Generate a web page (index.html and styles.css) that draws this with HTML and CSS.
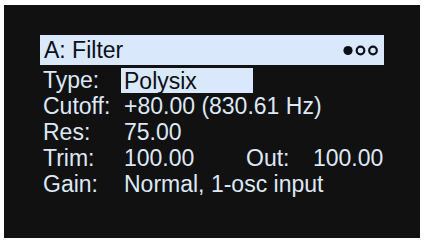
FILE: index.html
```html
<!DOCTYPE html>
<html>
<head>
<meta charset="utf-8">
<link rel="stylesheet" href="styles.css">
</head>
<body>
<div class="screen">
  <div class="header">
    <span class="title">A: Filter</span>
    <svg class="dots" width="36" height="11" viewBox="0 0 36 11">
      <circle cx="5" cy="5.5" r="4.6" fill="#0b1018"/>
      <circle cx="17.5" cy="5.5" r="3.8" fill="none" stroke="#0b1018" stroke-width="2.2"/>
      <circle cx="30" cy="5.5" r="3.8" fill="none" stroke="#0b1018" stroke-width="2.2"/>
    </svg>
  </div>
  <div class="row">
    <span class="label">Type:</span>
    <span class="value selected">Polysix</span>
  </div>
  <div class="row">
    <span class="label">Cutoff:</span>
    <span class="value">+80.00 (830.61 Hz)</span>
  </div>
  <div class="row">
    <span class="label">Res:</span>
    <span class="value">75.00</span>
  </div>
  <div class="row">
    <span class="label">Trim:</span>
    <span class="value short">100.00</span>
    <span class="label out">Out:</span>
    <span class="value">100.00</span>
  </div>
  <div class="row">
    <span class="label">Gain:</span>
    <span class="value">Normal, 1-osc input</span>
  </div>
</div>
</body>
</html>
```
FILE: styles.css
```css
html, body {
  margin: 0;
  padding: 0;
  background: #ffffff;
}
body {
  width: 426px;
  height: 244px;
  overflow: hidden;
}
.screen {
  margin: 5px 6px 0 4px;
  width: 416px;
  height: 233px;
  background: #111111;
  box-sizing: border-box;
  padding: 30px 0 0 36px;
  font-family: "Liberation Sans", Arial, sans-serif;
  font-size: 23px;
  color: #dde8f6;
}
.header {
  width: 344px;
  height: 30px;
  background: #dae8fb;
  color: #0b1018;
  display: flex;
  align-items: center;
  justify-content: space-between;
  padding: 0 5px 0 4px;
  box-sizing: border-box;
  line-height: 30px;
  margin-bottom: 2px;
}
.dots {
  display: block;
}
.row {
  display: flex;
  height: 26px;
  line-height: 26px;
  padding-left: 3px;
  white-space: nowrap;
}
.label {
  width: 78px;
  flex: none;
}
.value {
  padding-left: 3px;
}
.value.selected {
  background: #dae8fb;
  color: #0b1018;
  width: 132px;
  box-sizing: border-box;
  margin-top: 1px;
}
.value.short {
  width: 125px;
  box-sizing: border-box;
  flex: none;
}
.label.out {
  width: 64px;
}
```
